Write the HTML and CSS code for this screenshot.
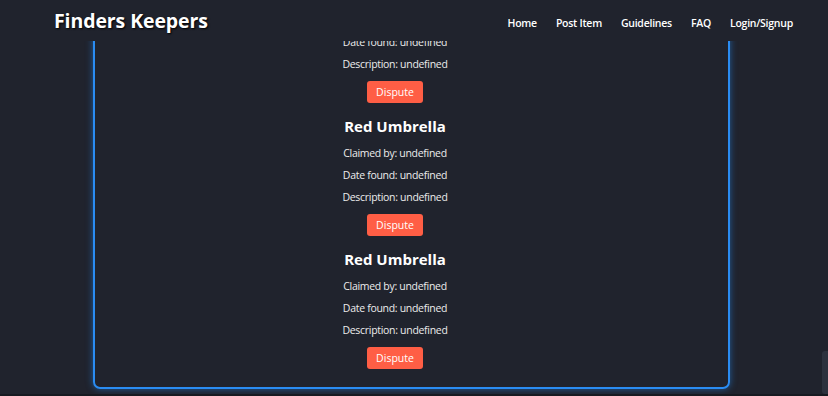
FILE: index.html
```html
<!DOCTYPE html>
<html lang="en">

<head>
  <meta charset="UTF-8">
  <meta name="viewport" content="width=device-width, initial-scale=1.0">
  <title>Finders Keepers - Claimed Items</title>
  <link rel="stylesheet" href="styles.css">
</head>

<body>

  <!-- navbar area -->
  <nav class="navbar">
    <a href="#" class="navbar-brand">Finders Keepers</a>
    <ul class="navbar-nav">
      <li class="nav-item"><a href="#" class="nav-link">Home</a></li>
      <li class="nav-item"><a href="#" class="nav-link">Post Item</a></li>
      <li class="nav-item"><a href="#" class="nav-link">Guidelines</a></li>
      <li class="nav-item"><a href="#" class="nav-link">FAQ</a></li>
      <li class="nav-item"><a href="#" class="nav-link">Login/Signup</a></li>
    </ul>
  </nav>

  <!-- claimed items list -->
  <main class="page">
    <div class="claims-box">

      <div class="claim">
        <h2 class="claim-title">Red Umbrella</h2>
        <p class="claim-line">Claimed by: undefined</p>
        <p class="claim-line">Date found: undefined</p>
        <p class="claim-line">Description: undefined</p>
        <button class="dispute-btn">Dispute</button>
      </div>

      <div class="claim">
        <h2 class="claim-title">Red Umbrella</h2>
        <p class="claim-line">Claimed by: undefined</p>
        <p class="claim-line">Date found: undefined</p>
        <p class="claim-line">Description: undefined</p>
        <button class="dispute-btn">Dispute</button>
      </div>

      <div class="claim">
        <h2 class="claim-title">Red Umbrella</h2>
        <p class="claim-line">Claimed by: undefined</p>
        <p class="claim-line">Date found: undefined</p>
        <p class="claim-line">Description: undefined</p>
        <button class="dispute-btn">Dispute</button>
      </div>

    </div>
  </main>

  <div class="page-edge"></div>
  <div class="scroll-thumb"></div>

</body>

</html>
```

FILE: styles.css
```css
/* page */
body {
  font-family: "Open Sans", Arial, sans-serif;
  margin: 0;
  padding: 0;
  height: 100vh;
  overflow: hidden;
  background-color: #20232d;
  color: #ececec;
  display: flex;
  flex-direction: column;
  justify-content: flex-end;
}

/* Navbar Styles */
.navbar {
  position: fixed;
  top: 0;
  left: 0;
  right: 0;
  height: 41px;
  z-index: 10;
  background-color: #20232d;
  display: flex;
  align-items: center;
  justify-content: space-between;
  padding: 0 35px 0 54px;
}

.navbar-brand {
  font-size: 19.5px;
  font-weight: 700;
  color: #ffffff;
  text-decoration: none;
  text-shadow: 1px 1px 2px #000;
  letter-spacing: -0.1px;
}

.navbar-nav {
  list-style-type: none;
  padding: 0;
  margin: 0;
  display: flex;
  gap: 19px;
}

.nav-link {
  color: #ffffff;
  text-decoration: none;
  font-size: 10.5px;
  font-weight: 600;
  letter-spacing: -0.25px;
}

/* claimed items box */
.page {
  flex-shrink: 0;
  display: flex;
  justify-content: center;
  padding: 0 6px 5px 0;
}

.claims-box {
  width: 637px;
  box-sizing: border-box;
  border: 2px solid #2a8cf2;
  border-radius: 7px;
  box-shadow: 0 0 7px rgba(33, 140, 245, 0.55);
  padding: 0 32px 18px 0;
  display: flex;
  flex-direction: column;
  gap: 11px;
}

.claim {
  flex-shrink: 0;
  display: flex;
  flex-direction: column;
  align-items: center;
  text-align: center;
}

.claim-title {
  font-size: 15px;
  font-weight: 700;
  line-height: 24px;
  margin: 0 0 4px;
  color: #ffffff;
}

.claim-line {
  font-size: 10.5px;
  line-height: 22px;
  margin: 0;
  letter-spacing: -0.3px;
}

.dispute-btn {
  margin-top: 6px;
  width: 56px;
  height: 22px;
  border: none;
  border-radius: 3px;
  background-color: #ff5e45;
  color: #ffffff;
  font-family: inherit;
  font-size: 10.5px;
  cursor: pointer;
}

.page-edge {
  flex-shrink: 0;
  height: 2px;
  background-color: #171a21;
}

/* scrollbar thumb */
.scroll-thumb {
  position: fixed;
  right: 0;
  bottom: 2px;
  width: 6px;
  height: 43px;
  border-radius: 3px 0 0 3px;
  background-color: #2d323e;
}
```
